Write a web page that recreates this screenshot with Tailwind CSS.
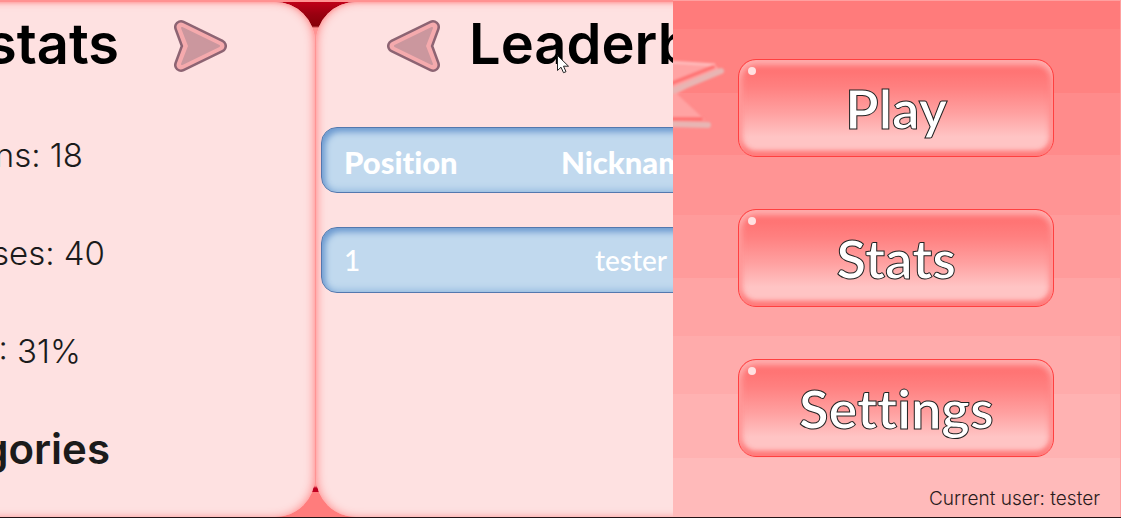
<!DOCTYPE html>
<html lang="en">
<head>
<meta charset="utf-8">
<title>Stats</title>
<script src="https://cdn.jsdelivr.net/npm/@tailwindcss/browser@4"></script>
</head>
<body class="relative flex h-screen overflow-hidden border-b border-[#231316] bg-[#ff7c7c] font-['Inter',sans-serif]">
  <main class="flex w-3/5 overflow-hidden border-t-2 border-[#ff9191]">
    <div class="flex min-w-0 gap-px bg-[linear-gradient(#c00018_0,#9a0010_12px,#850008_24px,#ff9494_26px,#ff9494_484px,#c00020_486px,#c00020_490px,#ff7c7c_490px)]">
      <section class="-ml-5 w-[335px] shrink-0 overflow-hidden rounded-r-[40px] bg-[#fee1e1] shadow-[inset_-2px_0_8px_#ff9c9c,inset_0_1px_3px_#ffaaaa]">
        <header class="flex items-center justify-end gap-[54px] pt-2 pr-[88px]">
          <h1 class="text-[56px] leading-[68px] font-semibold whitespace-nowrap text-black">stats</h1>
          <button aria-label="Next page" class="block pt-1">
            <svg class="h-[54px] w-[54px]" viewBox="0 0 54 54" stroke-linejoin="round">
              <path d="M8 8 47 27 8 46 15 27Z" fill="#8d6473" stroke="#8d6473" stroke-width="14"/>
              <path d="M8 8 47 27 8 46 15 27Z" fill="#f5aaad" stroke="#f5aaad" stroke-width="9"/>
              <path d="M9 9 46 27 9 45 16 27Z" fill="#cb979e" stroke="#cb979e" stroke-width="2"/>
            </svg>
          </button>
        </header>
        <div class="flex flex-col items-end pt-14 text-[33px] leading-[42px] text-[#1b1b1b]">
          <p class="pr-[232px] font-light whitespace-nowrap">Wins: 18</p>
          <p class="pt-14 pr-[210px] font-light whitespace-nowrap">Losses: 40</p>
          <p class="pt-14 pr-[234px] font-light whitespace-nowrap">: 31%</p>
          <h2 class="pt-14 pr-[205px] text-[42px] font-semibold whitespace-nowrap">categories</h2>
        </div>
      </section>
      <section class="w-[630px] shrink-0 rounded-[40px] bg-[#fee1e1] shadow-[inset_2px_0_8px_#ff9c9c,inset_0_1px_3px_#ffaaaa]">
        <header class="flex items-center gap-[28px] pt-2 pl-[71px]">
          <button aria-label="Previous page" class="block pt-1">
            <svg class="h-[54px] w-[54px]" viewBox="0 0 54 54" stroke-linejoin="round">
              <path d="M46 8 7 27 46 46 39 27Z" fill="#8d6473" stroke="#8d6473" stroke-width="14"/>
              <path d="M46 8 7 27 46 46 39 27Z" fill="#f5aaad" stroke="#f5aaad" stroke-width="9"/>
              <path d="M45 9 8 27 45 45 38 27Z" fill="#cb979e" stroke="#cb979e" stroke-width="2"/>
            </svg>
          </button>
          <h1 class="text-[56px] leading-[68px] font-semibold text-black">Leaderboard</h1>
        </header>
        <table class="block px-[5px] pt-[49px] font-['Lato',sans-serif] text-[28px] leading-9 text-white [font-variant-ligatures:none]">
          <thead class="block">
            <tr class="grid h-[66px] grid-cols-3 items-center rounded-2xl border border-[#5478ae] bg-[#c1d9ee] px-[22px] pt-1 text-[31px] shadow-[inset_3px_4px_6px_#6d9ad0,inset_0_-3px_6px_#a0c2e3]">
              <th class="text-left font-black">Position</th><th class="font-black">Nickname</th><th class="text-right font-black">Wins</th>
            </tr>
          </thead>
          <tbody class="block pt-[34px]">
            <tr class="grid h-[66px] grid-cols-3 items-center rounded-2xl border border-[#5478ae] bg-[#c1d9ee] px-[22px] font-medium shadow-[inset_3px_4px_6px_#6d9ad0,inset_0_-3px_6px_#a0c2e3]">
              <td>1</td><td class="text-center">tester</td><td class="text-right">18</td>
            </tr>
          </tbody>
        </table>
      </section>
    </div>
  </main>

  <aside class="relative flex w-2/5 flex-col items-center overflow-hidden border-t border-r border-[#ffa0a0] bg-[linear-gradient(#ff7b7b_28px,#ff8281_28px_92px,#ff8b8b_92px_154px,#ff9494_154px_214px,#ff9b9b_214px_277px,#ffa4a4_277px_335px,#ffabab_335px_393px,#ffb2b2_393px_457px,#ffbaba_457px)] pt-[58px]">
    <svg class="absolute top-[51px] left-0 h-[90px] w-[60px]" viewBox="0 52 60 90" aria-hidden="true">
      <defs><filter id="soft" x="-20%" y="-20%" width="140%" height="140%"><feGaussianBlur stdDeviation="1.2"/></filter></defs>
      <g filter="url(#soft)">
        <path d="M-4 62 42 65 46 69 4 94 32 120-4 120Z" fill="#ffa3a3"/>
        <path d="M-4 62 42 65" stroke="#ffbaba" stroke-width="3" fill="none"/>
        <path d="M-3 92 48 71M-3 124 35 125" stroke="#e8b5b3" stroke-width="6" stroke-linecap="round"/>
        <path d="M-3 84 40 67M-3 119 28 119" stroke="#ff7474" stroke-width="4" stroke-linecap="round"/>
      </g>
    </svg>
    <nav class="flex flex-col gap-[52px] font-['Lato',sans-serif] text-[54px] font-bold text-white [-webkit-text-stroke:1px_#222] [font-variant-ligatures:none]">
      <button class="relative h-[98px] w-[316px] rounded-[18px] border border-[#ff4040] bg-[linear-gradient(#ff7272_10%,#ff8080_28%,#ffa0a0_55%,#ffc4c4_80%)] shadow-[inset_0_5px_6px_#ffadad,inset_0_-5px_5px_#ff7979,inset_3px_0_6px_#ff9696,inset_-3px_0_6px_#ff8585]"><span class="absolute top-[7px] left-[9px] size-2 rounded-full bg-[#ffe1e1]"></span>Play</button>
      <button class="relative h-[98px] w-[316px] rounded-[18px] border border-[#ff4040] bg-[linear-gradient(#ff7272_10%,#ff8080_28%,#ffa0a0_55%,#ffc4c4_80%)] shadow-[inset_0_5px_6px_#ffadad,inset_0_-5px_5px_#ff7979,inset_3px_0_6px_#ff9696,inset_-3px_0_6px_#ff8585]"><span class="absolute top-[7px] left-[9px] size-2 rounded-full bg-[#ffe1e1]"></span>Stats</button>
      <button class="relative h-[98px] w-[316px] rounded-[18px] border border-[#ff4040] bg-[linear-gradient(#ff7272_10%,#ff8080_28%,#ffa0a0_55%,#ffc4c4_80%)] shadow-[inset_0_5px_6px_#ffadad,inset_0_-5px_5px_#ff7979,inset_3px_0_6px_#ff9696,inset_-3px_0_6px_#ff8585]"><span class="absolute top-[7px] left-[9px] size-2 rounded-full bg-[#ffe1e1]"></span>Settings</button>
    </nav>
    <p class="mt-auto self-end pr-5 pb-[6px] text-[19px] leading-6 font-light text-[#2a1b1c]">Current user: tester</p>
  </aside>

  <svg class="absolute top-[55px] left-[557px] h-[19px] w-3" viewBox="0 0 12 19" aria-hidden="true">
    <path d="M.5.5v15l3.500-3.300 2.500 5.500 2.500-1-2.500-5.500H11.500Z" fill="#fff" stroke="#222" stroke-width="1"/>
  </svg>
</body>
</html>
